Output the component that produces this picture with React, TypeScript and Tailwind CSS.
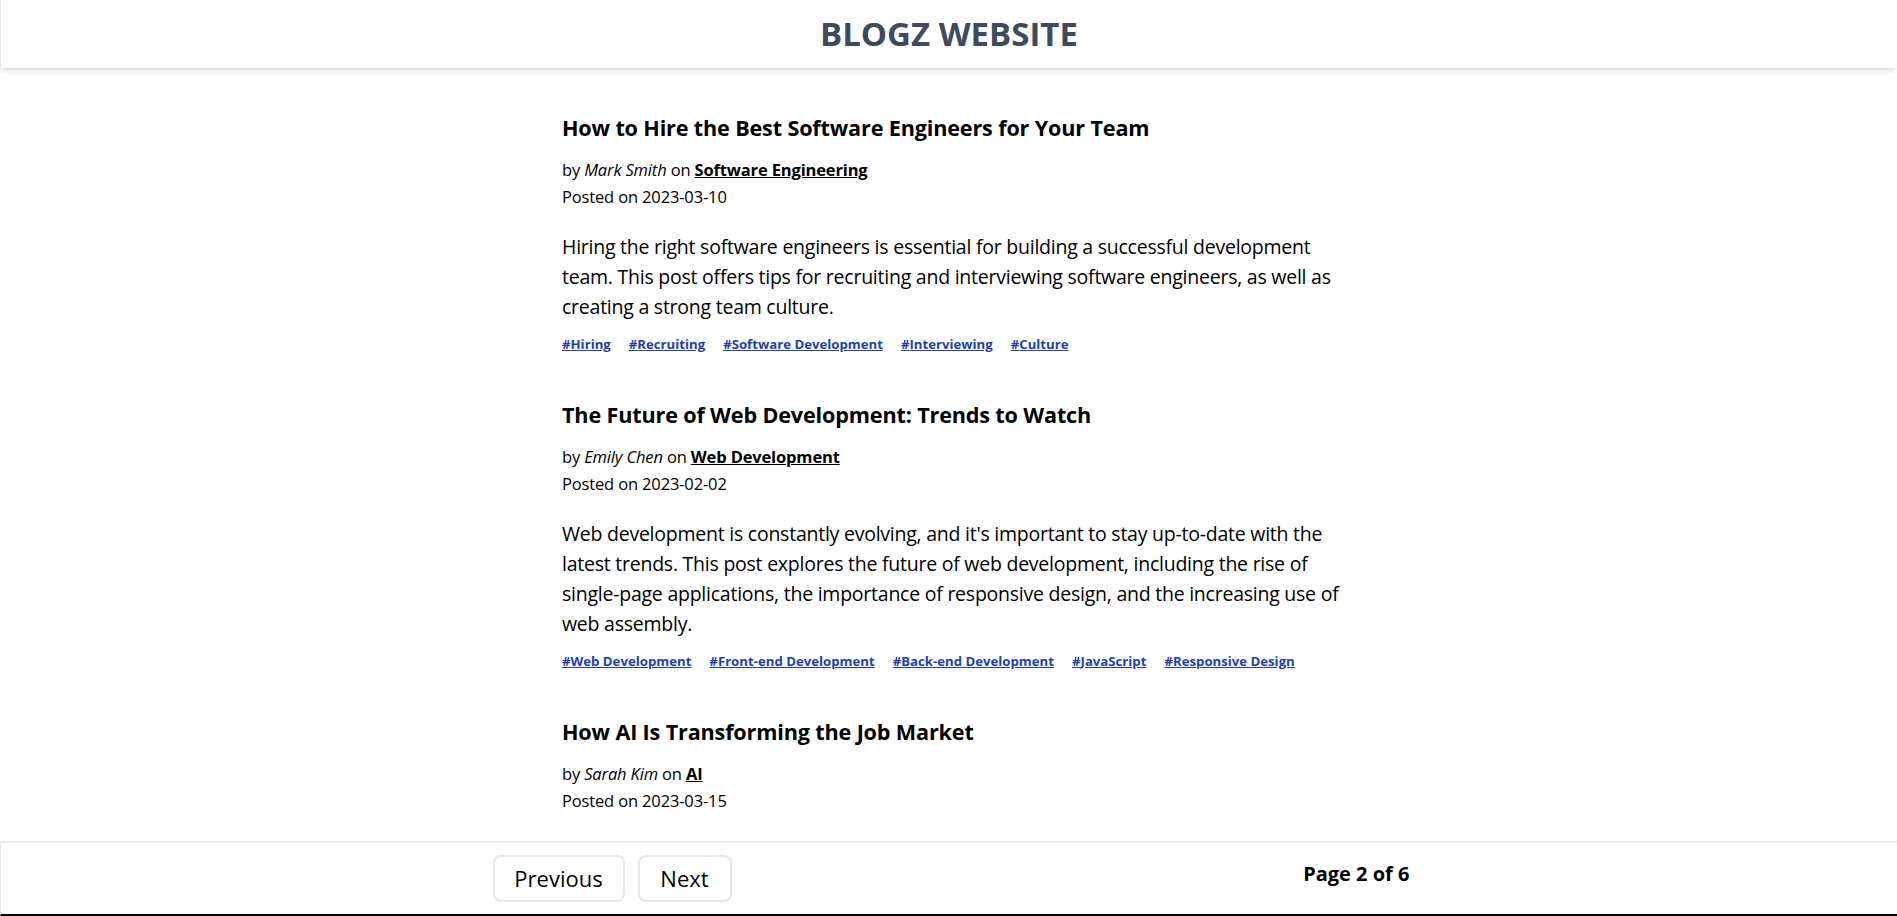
type Post = {
  title: string;
  author: string;
  category: string;
  date: string;
  body?: string;
  tags?: string[];
};

const posts: Post[] = [
  {
    title: 'How to Hire the Best Software Engineers for Your Team',
    author: 'Mark Smith',
    category: 'Software Engineering',
    date: '2023-03-10',
    body: 'Hiring the right software engineers is essential for building a successful development team. This post offers tips for recruiting and interviewing software engineers, as well as creating a strong team culture.',
    tags: ['Hiring', 'Recruiting', 'Software Development', 'Interviewing', 'Culture'],
  },
  {
    title: 'The Future of Web Development: Trends to Watch',
    author: 'Emily Chen',
    category: 'Web Development',
    date: '2023-02-02',
    body: "Web development is constantly evolving, and it's important to stay up-to-date with the latest trends. This post explores the future of web development, including the rise of single-page applications, the importance of responsive design, and the increasing use of web assembly.",
    tags: ['Web Development', 'Front-end Development', 'Back-end Development', 'JavaScript', 'Responsive Design'],
  },
  {
    title: 'How AI Is Transforming the Job Market',
    author: 'Sarah Kim',
    category: 'AI',
    date: '2023-03-15',
  },
];

function PostCard({ post }: { post: Post }) {
  return (
    <article className="mb-[47px]">
      <h2 className="text-[21.6px] font-bold leading-[28px] tracking-[-0.15px] text-black">{post.title}</h2>
      <div className="mt-[14px] text-[16.5px] leading-[27px] tracking-[-0.15px] text-black">
        <p>
          by <em>{post.author}</em> on{' '}
          <a href="#" className="font-bold underline">
            {post.category}
          </a>
        </p>
        <p>Posted on {post.date}</p>
      </div>
      {post.body && (
        <p className="mt-[22px] text-[19.5px] leading-[30px] tracking-[-0.24px] text-black">{post.body}</p>
      )}
      {post.tags && (
        <div className="mt-3 flex flex-wrap gap-x-[18px] text-[13.2px] leading-[20px] font-bold">
          {post.tags.map((tag) => (
            <a key={tag} href="#" className="text-[#1e40af] underline">
              #{tag}
            </a>
          ))}
        </div>
      )}
    </article>
  );
}

export default function App() {
  return (
    <div className="min-h-screen bg-white font-['Open_Sans',sans-serif]">
      <header className="flex h-[68px] items-center justify-center border-l border-gray-200 bg-white shadow-md">
        <h1 className="text-[33px] font-bold text-[#3e4a5f]">BLOGZ WEBSITE</h1>
      </header>

      <div className="flex justify-center pl-[7px]">
        <main className="w-full max-w-[780px] pt-[46px]">
          {posts.map((post) => (
            <PostCard key={post.title} post={post} />
          ))}
        </main>
      </div>

      <footer className="fixed inset-x-0 bottom-0 flex h-[75px] items-center justify-center border-t-2 border-b-2 border-l border-t-gray-200 border-b-black border-l-gray-200 bg-white">
        <div className="ml-[4px] flex w-[917px] items-center justify-between">
          <div className="flex gap-[13px]">
            <button className="h-[47px] w-[132px] rounded-lg border-2 border-gray-200 text-[22px] text-black">
              Previous
            </button>
            <button className="h-[47px] w-[94px] rounded-lg border-2 border-gray-200 text-[22px] text-black">
              Next
            </button>
          </div>
          <span className="mb-[10px] text-[20px] font-bold text-black">Page 2 of 6</span>
        </div>
      </footer>
    </div>
  );
}
